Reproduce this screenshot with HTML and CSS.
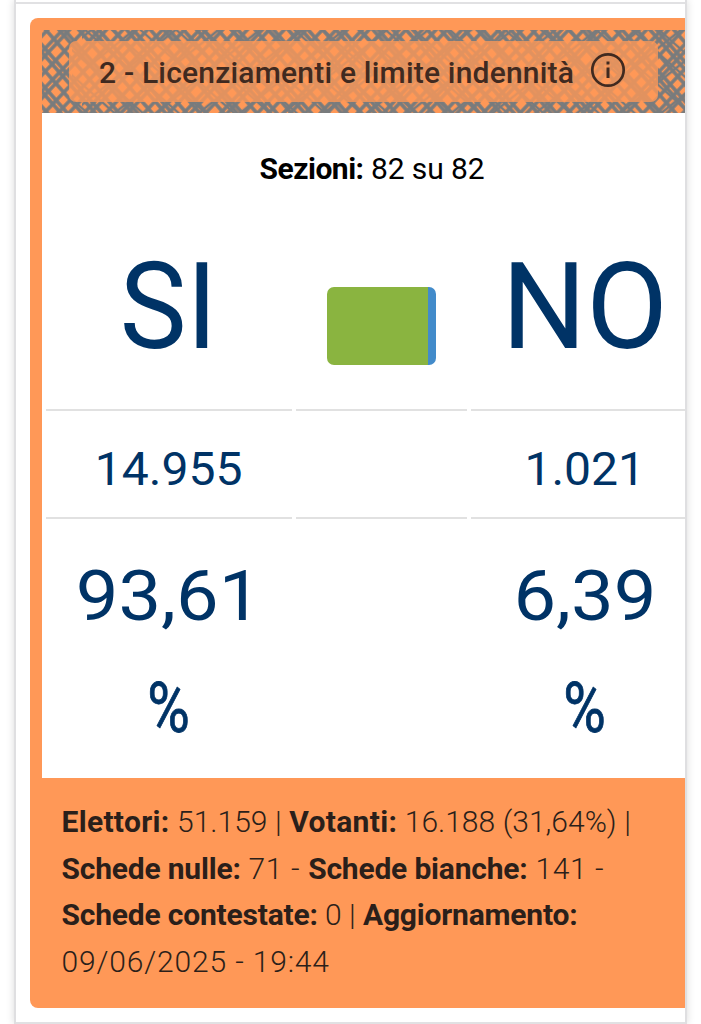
FILE: index.html
```html
<!DOCTYPE html>
<html lang="it">
<head>
<meta charset="utf-8">
<title>Licenziamenti e limite indennità</title>
<link rel="stylesheet" href="styles.css">
</head>
<body>
<main class="frame">
  <div class="section">
  <section class="card">
    <header class="banner">
      <svg class="weave" viewBox="0 0 645 84" preserveAspectRatio="none" aria-hidden="true">
        <defs>
          <pattern id="h1" width="79" height="200" patternUnits="userSpaceOnUse" patternTransform="rotate(-41)">
            <path d="M3 0V200M13 0V200M17 0V200M28 0V200M38 0V200M43 0V200M54 0V200M64 0V200M69 0V200" stroke="#787b7d" stroke-width="3.6"/>
          </pattern>
          <pattern id="h2" width="73" height="200" patternUnits="userSpaceOnUse" patternTransform="rotate(43)">
            <path d="M4 0V200M15 0V200M20 0V200M31 0V200M42 0V200M47 0V200M59 0V200M69 0V200" stroke="#787b7d" stroke-width="3.5"/>
          </pattern>
          <pattern id="h3" width="61" height="200" patternUnits="userSpaceOnUse" patternTransform="rotate(-48)">
            <path d="M5 0V200M29 0V200M47 0V200" stroke="#787b7d" stroke-width="2.4"/>
          </pattern>
          <pattern id="h4" width="53" height="200" patternUnits="userSpaceOnUse" patternTransform="rotate(51)">
            <path d="M5 0V200M31 0V200" stroke="#787b7d" stroke-width="2.6"/>
          </pattern>
        </defs>
        <rect width="645" height="84" fill="url(#h1)"/>
        <rect width="645" height="84" fill="url(#h2)"/>
        <rect x="30" width="615" height="84" fill="url(#h3)"/>
        <rect x="40" width="605" height="84" fill="url(#h4)"/>
      </svg>
      <h1 class="title">
        <span class="title-text">2 - Licenziamenti e limite indennità</span>
        <svg class="info" viewBox="0 0 36 36" aria-hidden="true">
          <circle cx="18" cy="18" r="15.7" fill="none" stroke="#402a20" stroke-width="2.7"/>
          <path d="M18 15.5V26M18 9.5V12.5" stroke="#402a20" stroke-width="3"/>
        </svg>
      </h1>
    </header>
    <div class="panel">
      <p class="sections"><b>Sezioni:</b> <span class="sections-count">82 su 82</span></p>
      <div class="results">
        <div class="cell choice"><span class="choice-si">SI</span></div>
        <div class="cell chart"><div class="bar"><i class="bar-yes"></i><i class="bar-no"></i></div></div>
        <div class="cell choice"><span class="choice-no">NO</span></div>
        <div class="cell votes"><span class="count">14.955</span></div>
        <div class="cell"></div>
        <div class="cell votes"><span class="count">1.021</span></div>
        <div class="cell share"><span class="rate">93,61</span><span class="percent">%</span></div>
        <div class="cell share"></div>
        <div class="cell share"><span class="rate">6,39</span><span class="percent">%</span></div>
      </div>
    </div>
    <footer class="summary">
      <div class="turnout"><b>Elettori:</b> 51.159 | <b>Votanti:</b> 16.188 (31,64%) |</div>
      <div class="ballots"><b>Schede nulle:</b> 71 - <b>Schede bianche:</b> 141 -</div>
      <div class="contested"><b>Schede contestate:</b> 0 | <b>Aggiornamento:</b></div>
      <div class="updated">09/06/2025 - 19:44</div>
    </footer>
  </section>
  </div>
</main>
</body>
</html>
```
FILE: styles.css
```css
* { box-sizing: border-box; }
body {
  margin: 0;
  height: 1024px;
  overflow: hidden;
  background: #fff;
  font-family: Roboto, "Liberation Sans", sans-serif;
  padding-left: 14px;
}
.frame {
  width: 673px;
  height: 1024px;
  border: solid #dfdfe1;
  border-width: 0 1.5px 0 2px;
  border-right-width: 2px;
  box-shadow: 0 0 8px rgba(0, 0, 0, .15);
  padding-top: 2px;
  overflow: hidden;
}
.section {
  height: 1022px;
  border: solid #e1e1e3;
  border-width: 2px 0;
  padding: 14px 0 0 14px;
  overflow: hidden;
}
.card {
  width: 690px;
  height: 990px;
  background: #ff9857;
  border-radius: 8px;
  padding: 12px 0 0 11.5px;
}
.banner {
  position: relative;
  height: 83px;
  padding: 11px 0 0 27.5px;
}
.weave { position: absolute; left: 0; top: 0; width: 645px; height: 83px; }
.title {
  position: relative;
  margin: 0;
  width: 589px;
  height: 61px;
  border-radius: 7px;
  background: rgba(255, 152, 87, .78);
  display: flex;
  align-items: center;
  padding: 1px 0 0 30px;
  font-size: 30px;
  font-weight: 500;
  letter-spacing: .2px;
  color: #402a20;
  white-space: nowrap;
}
.title-text { width: 491px; }
.info { width: 36px; height: 36px; margin-top: -5px; }
.panel { height: 665px; background: #fff; overflow: hidden; }
.sections {
  margin: 0;
  padding: 36px 0 0 218px;
  font-size: 30px;
  line-height: 40px;
  color: #000;
  white-space: nowrap;
}
.sections b { letter-spacing: -.5px; }
.sections-count { font-weight: 400; letter-spacing: -.1px; }
.results {
  display: grid;
  grid-template-columns: 246px 171px 228px;
  grid-template-rows: 190px 106px 252px;
  gap: 2px 4px;
  padding: 32px 0 0 4px;
  color: #036;
}
.cell {
  border-bottom: 2px solid #e1e1e1;
  display: flex;
  justify-content: center;
  align-items: center;
}
.choice { font-size: 121px; line-height: 140px; padding-bottom: 17px; }
.choice-si { transform: scaleX(.93); }
.choice-no { transform: scaleX(.98); }
.chart { padding: 21px 0 0; }
.bar { display: flex; width: 109px; height: 78px; border-radius: 7px; overflow: hidden; }
.bar-yes { width: 93%; background: #8ab440; }
.bar-no { flex: 1; background: #428bca; }
.votes { font-size: 46px; padding-top: 7px; }
.count { transform: scaleX(1.045); }
.share {
  flex-direction: column;
  justify-content: flex-start;
  border: 0;
  padding-top: 19px;
  font-size: 70px;
  line-height: 112px;
}
.rate { transform: scaleX(1.085); }
.percent { transform: scaleX(.83); -webkit-text-stroke: .8px #036; }
.summary {
  padding: 21px 0 0 20px;
  font-size: 30px;
  line-height: 46.7px;
  font-weight: 300;
  color: #2b1f1a;
  white-space: nowrap;
}
b { font-weight: 700; }
.turnout b { letter-spacing: .3px; }
.turnout { letter-spacing: 0; word-spacing: .3px; }
.ballots { letter-spacing: .6px; }
.ballots b { letter-spacing: -.2px; }
.contested { letter-spacing: 0; }
.contested b { letter-spacing: -.2px; }
.updated { letter-spacing: .85px; }
```
